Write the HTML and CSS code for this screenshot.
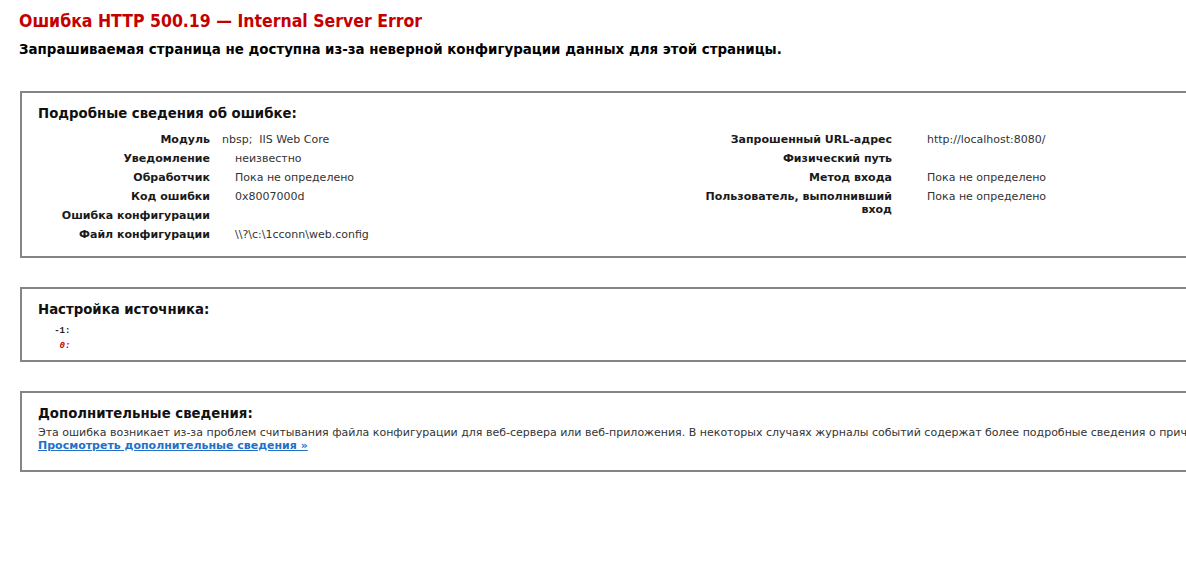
FILE: index.html
```html
<!DOCTYPE html>
<html lang="ru">
<head>
<meta charset="utf-8">
<title>IIS 8.5 Detailed Error - 500.19 - Internal Server Error</title>
<link rel="stylesheet" href="styles.css">
</head>
<body>
<div class="page">
  <h1 class="title">Ошибка HTTP 500.19 — Internal Server Error</h1>
  <h2 class="subtitle">Запрашиваемая страница не доступна из-за неверной конфигурации данных для этой страницы.</h2>

  <section class="box box-details">
    <h3 class="box-title">Подробные сведения об ошибке:</h3>
    <div class="details">
      <div class="details-left">
        <div class="kv kv-left">
          <div class="k">Модуль</div><div class="v">nbsp;&nbsp; IIS Web Core</div>
          <div class="k">Уведомление</div><div class="v v-indent">неизвестно</div>
          <div class="k">Обработчик</div><div class="v v-indent">Пока не определено</div>
          <div class="k">Код ошибки</div><div class="v v-indent">0x8007000d</div>
          <div class="k">Ошибка конфигурации</div><div class="v v-indent"></div>
          <div class="k">Файл конфигурации</div><div class="v v-indent">\\?\c:\1cconn\web.config</div>
        </div>
      </div>
      <div class="details-right">
        <div class="kv kv-right">
          <div class="k">Запрошенный URL-адрес</div><div class="v">http://localhost:8080/</div>
          <div class="k">Физический путь</div><div class="v"></div>
          <div class="k">Метод входа</div><div class="v">Пока не определено</div>
          <div class="k">Пользователь, выполнивший вход</div><div class="v">Пока не определено</div>
        </div>
      </div>
    </div>
  </section>

  <section class="box box-source">
    <h3 class="box-title">Настройка источника:</h3>
    <pre class="source"><code>   -1: 
</code><code class="hl">    0: </code></pre>
  </section>

  <section class="box box-more">
    <h3 class="box-title">Дополнительные сведения:</h3>
    <p class="more-text">Эта ошибка возникает из-за проблем считывания файла конфигурации для веб-сервера или веб-приложения. В некоторых случаях журналы событий содержат более подробные сведения о причинах этой ошибки.</p>
    <p class="more-link-row"><a class="more-link" href="#">Просмотреть дополнительные сведения »</a></p>
  </section>
</div>
</body>
</html>
```

FILE: styles.css
```css
html, body {
  margin: 0;
  padding: 0;
  background: #ffffff;
  overflow: hidden;
}

body {
  font-family: "DejaVu Sans", Verdana, sans-serif;
  font-size: 11px;
  color: #222222;
}

.page {
  padding: 11px 0 0 19px;
}

.title {
  margin: 0;
  font-family: "DejaVu Sans Condensed", "DejaVu Sans", sans-serif;
  font-stretch: condensed;
  font-size: 17.5px;
  line-height: 21px;
  font-weight: bold;
  color: #c40000;
}

.subtitle {
  margin: 10px 0 0 0;
  font-size: 13.4px;
  line-height: 15px;
  font-weight: bold;
  color: #000000;
}

.box {
  width: 1400px;
  margin-left: 1px;
  border: 2px solid #858585;
  padding: 13px 0 0 16px;
  box-sizing: border-box;
}

.box-details {
  margin-top: 34px;
  padding-bottom: 12px;
}

.box-source {
  margin-top: 29px;
  padding-bottom: 6px;
}

.box-more {
  margin-top: 29px;
  padding-bottom: 18px;
}

.box-title {
  margin: 0;
  font-size: 13.3px;
  line-height: 15px;
  font-weight: bold;
  color: #111111;
}

.details {
  display: flex;
  margin-top: 9px;
}

.details-left {
  width: 656px;
  flex: none;
}

.details-right {
  flex: none;
}

.kv {
  display: grid;
  align-items: start;
}

.kv-left {
  grid-template-columns: 172px auto;
  column-gap: 12px;
}

.kv-right {
  grid-template-columns: 198px auto;
  column-gap: 35px;
}

.k {
  padding: 3px 0;
  line-height: 13px;
  min-height: 13px;
  text-align: right;
  font-weight: bold;
  color: #1a1a1a;
}

.v {
  padding: 3px 0;
  line-height: 13px;
  min-height: 13px;
  color: #333333;
}

.v-indent {
  padding-left: 13px;
}

.source {
  margin: 7px 0 0 0;
  font-family: "Liberation Mono", "DejaVu Sans Mono", monospace;
  font-size: 9px;
  line-height: 15px;
  color: #222222;
}

.source code {
  font-family: inherit;
  font-weight: bold;
}

.source .hl {
  color: #cc0000;
  font-style: italic;
}

.more-text {
  margin: 5px 0 0 0;
  line-height: 13px;
  white-space: nowrap;
  color: #333333;
}

.more-link-row {
  margin: 0;
  line-height: 13px;
}

.more-link {
  color: #2370c8;
  font-weight: bold;
}
```
